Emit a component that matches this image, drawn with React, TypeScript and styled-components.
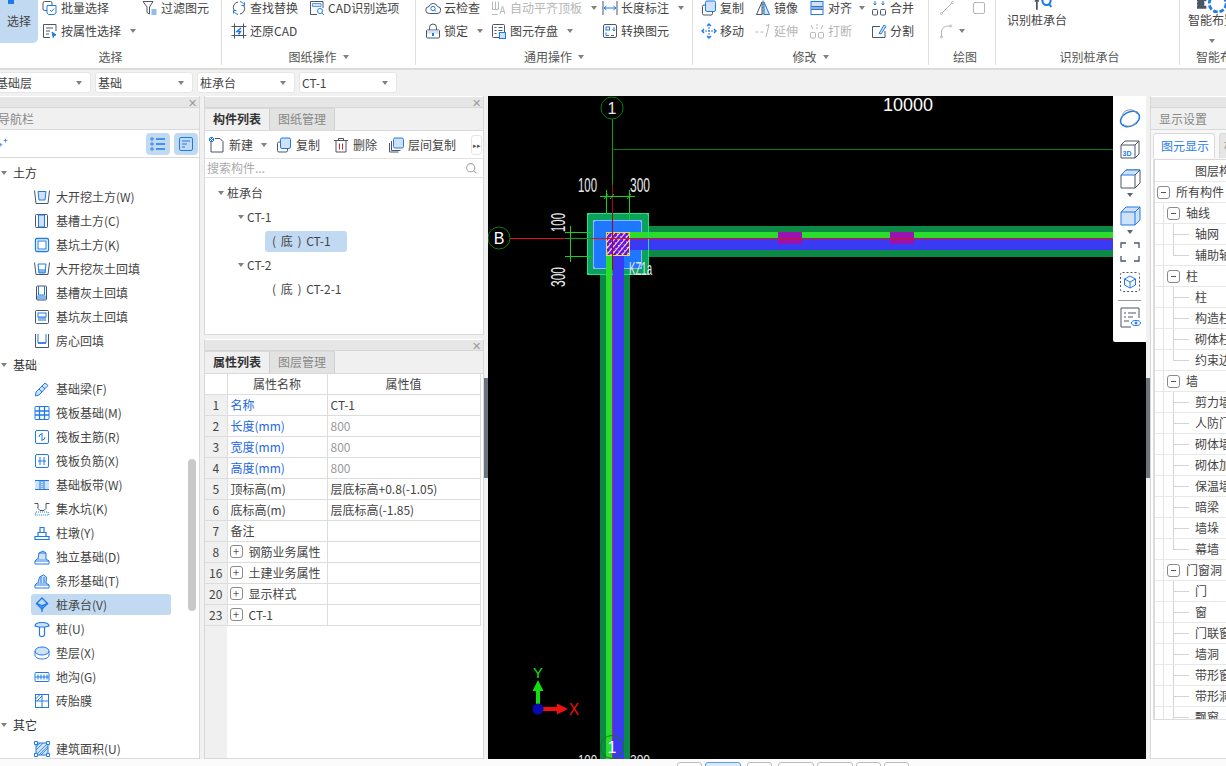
import React from "react";
import styled, { createGlobalStyle } from "styled-components";

const S = "#4a5568";
const B = "#1f7ae8";
const L = "#cfe2fa";
const G = "#b4b8bd";

const Global = createGlobalStyle`
  html, body { margin: 0; padding: 0; width: 1226px; height: 766px; overflow: hidden; background: #f1f1f1; }
  #root { width: 1226px; height: 766px; overflow: hidden; }
  * { box-sizing: border-box; }
  body { font-family: "Noto Sans CJK SC", "Liberation Sans", sans-serif; font-size: 12px; color: #333; line-height: 16px; }
`;

const Svg = styled.svg<{ $w?: number }>`
  width: ${(p) => p.$w ?? 16}px;
  height: ${(p) => p.$w ?? 16}px;
  flex: none;
  display: block;
`;

const icons: Record<string, React.ReactNode> = {
  batch: <><rect x="1" y="1.500" width="9" height="9" rx="1.500" /><path d="M5 5.500h9v7.500l-2 1.500H6.500L5 13z" stroke={B} fill="#fff" /><path d="M8 10l1.500 1.500L12 8.500" stroke={B} /></>,
  attr: <><path d="M14 8V1.500H1.500v13H8" /><path d="M4 5h7M4 8h4M4 11h3" /><path d="M10 9l4 3-2 .5-.8 2z" stroke={B} fill={B} /></>,
  filter: <><path d="M1 1.500h10L7.500 7v7L5 12.500V7z" /><path d="M9.500 10h5M9.500 12h5M9.500 14h5" stroke={B} /></>,
  replace: <><path d="M3 10a5.500 5.500 0 0 1 4-8M13 6a5.500 5.500 0 0 1-4 8" /><path d="M9 1.500a5.500 5.500 0 0 1 4 3M7 14.500a5.500 5.500 0 0 1-4-3" stroke={B} /><path d="M13.500 2.500v3h-3M2.500 13.500v-3h3" stroke={B} /></>,
  restore: <><path d="M0.500 3.500h15M0.500 12.500h15M3.500 .5v15M12.500 .5v15" /><path d="M10 5L6 8.500h3.500L7.500 11.500" stroke={B} strokeWidth="1.500" /></>,
  cad: <><path d="M14 8V1.500H1.500v13H8" /><path d="M3.500 3.500h8.500v3H3.500z" fill={L} stroke={B} strokeWidth=".7" /><circle cx="11" cy="11" r="2.500" stroke={B} /><path d="M13 13l2 2" stroke={B} /></>,
  cloud: <><path d="M4.500 13.500a3.500 3.500 0 0 1-.5-7 4.500 4.500 0 0 1 8.500 0 3.500 3.500 0 0 1-.5 7z" /><circle cx="8" cy="8.500" r="2.200" stroke={B} /><path d="M9.500 10l1.500 1.500" stroke={B} /></>,
  lock: <><path d="M4.500 7V4.500a3.500 3.500 0 0 1 7 0V7" /><rect x="1.500" y="7" width="13" height="8" rx="1" /><rect x="2" y="7.500" width="12" height="3" fill={L} stroke="none" /><path d="M8 10v3" stroke={B} strokeWidth="2" /></>,
  auto: <g stroke={G}><path d="M1.500 1.500v8M4.500 1.500v8M7.500 1.500v8M1.500 9.500h6M1 14.500h6" /><path d="M9 14l2.500-8L14 14M10 11.500h3" /></g>,
  store: <><rect x="1.500" y="1.500" width="12" height="13" rx="1" /><path d="M3.500 4.500h2M7.500 4.500h4M3.500 7.500h2M7.500 7.500h4M3.500 10.500h2" /><rect x="8.500" y="9.500" width="6" height="6" fill={L} stroke={B} /></>,
  dim: <><path d="M1 1v14M15 1v14" /><path d="M2 8h12M2 8l2.500-2M2 8l2.500 2M14 8l-2.500-2M14 8l-2.500 2" stroke={B} /></>,
  convert: <><rect x="1.500" y="1.500" width="13" height="13" rx="1.500" /><rect x="4" y="4" width="3.500" height="3" stroke={B} /><path d="M12 4v4l-1.500-1.500M12 8l1-1.500M4 9.500v3h3" stroke={B} /><path d="M9 12.500h3" /></>,
  copy: <><rect x="1.500" y="5" width="10" height="10" rx="1.500" /><rect x="4.500" y="1" width="10" height="10.500" rx="1.500" fill={L} stroke={B} /></>,
  mirror: <><path d="M7 2L1.500 14.500H7z" /><path d="M9 2l5.500 12.500H9z" fill={L} stroke={B} /><path d="M8 .5v15" strokeDasharray="2 1" /></>,
  align: <><rect x="2" y="1.500" width="12" height="5" fill={L} stroke={B} /><rect x="2" y="9.500" width="12" height="5" stroke={B} /><path d="M1 8h14" /></>,
  merge: <><rect x="1.500" y="9.500" width="5" height="5.500" rx="1" /><rect x="9.500" y="9.500" width="5" height="5.500" rx="1" /><path d="M4 1v4M2.500 3.500L4 5l1.500-1.500M12 1v4M10.500 3.500L12 5l1.500-1.500" stroke={B} /></>,
  move: <><path d="M8 1v14M1 8h14" stroke={B} strokeDasharray="2 1" /><path d="M6 3l2-2 2 2M6 13l2 2 2-2M3 6L1 8l2 2M13 6l2 2-2 2" stroke={B} strokeWidth="1.300" /></>,
  extend: <g stroke={G}><path d="M.5 9h3M5.500 9h3" /><path d="M11 3l3-1.500L11 14" /></g>,
  breakk: <g stroke={G}><path d="M8 1v6" strokeDasharray="2 1" /><rect x="1.500" y="9.500" width="5" height="5.500" rx="1" /><rect x="9.500" y="9.500" width="5" height="5.500" rx="1" /><path d="M2 2l2 4M14 2l-2 4" /></g>,
  split: <><path d="M14 8v6.500H1.500v-11H9" /><path d="M8 10.500L13 2l2 1.500L10 11z" stroke={B} fill={L} /></>,
  line: <g stroke={G}><path d="M3 13L13 3" /><circle cx="2.500" cy="13.500" r="1" /><circle cx="13.500" cy="2.500" r="1" /></g>,
  rect: <g stroke={G}><rect x="2.500" y="2.500" width="11" height="11" rx="1.500" /></g>,
  arc: <g stroke={G}><path d="M2.500 14V9a6 6 0 0 1 6-6h2" /><circle cx="2.500" cy="14" r="1" /><circle cx="11.500" cy="3" r="1" /></g>,
  n1: <><path d="M.5 1.500l1.500 13M15.500 1.500L14 14.500M2 14.500h12" /><path d="M4 2.500h8L11 11H5z" fill={L} stroke={B} /></>,
  n2: <><rect x="1.500" y="1.500" width="12" height="13" rx="1" /><rect x="4.500" y="2" width="6" height="12" fill={L} stroke={B} /></>,
  n3: <><rect x="1.500" y="1.500" width="13" height="13" rx="1.500" stroke={B} strokeWidth="1.300" /><rect x="4" y="4" width="8" height="8" stroke={B} /></>,
  n4: <><path d="M.5 1.500l1.500 12h12l1.500-12" /><path d="M4 3h8l-1 9H5z" stroke={B} /><path d="M4.500 8h7v4h-7z" fill={B} opacity=".55" stroke="none" /></>,
  n5: <><rect x="2.500" y="1" width="10" height="14" rx="1" stroke={S} /><path d="M4.500 1v9h6V1" stroke={B} /><rect x="3" y="10.500" width="9" height="4" fill={B} opacity=".55" stroke="none" /></>,
  n6: <><rect x="1.500" y="1.500" width="13" height="13" rx="1" /><rect x="4" y="4" width="8" height="4" stroke={B} /><rect x="4" y="8" width="8" height="4" fill={B} opacity=".55" stroke="none" /></>,
  n7: <><path d="M1.500 1v13.500h13V1" /><path d="M4 1v9h8V1" stroke={B} /><path d="M4 10h8" stroke={B} strokeWidth="1.500" /></>,
  n8: <><path d="M2 11L11 2l3 2.500L5 14l-3.500 1z" stroke={B} fill={L} /><path d="M5 8l3 3M8 5l3 3" stroke={B} /></>,
  n9: <g stroke={B}><rect x="1" y="1.500" width="14" height="13" rx="1" /><path d="M1 6h14M1 10h14M5.500 1.500v13M10.500 1.500v13" strokeWidth="1.300" /></g>,
  n10: <g stroke={B}><rect x="1.500" y="1.500" width="13" height="13" rx="1.500" /><path d="M8 4v8M5 8a3 3 0 0 1 3-3M11 8a3 3 0 0 1-3 3" /></g>,
  n11: <g stroke={B}><rect x="1.500" y="1.500" width="13" height="13" rx="1.500" /><path d="M6 4v8M10 4v8M4 8h8" /></g>,
  n12: <g stroke={B}><rect x="1" y="3" width="14" height="10" fill={L} stroke="none" /><path d="M1 3.500h14M1 12.500h14M6 3.500v9M10 3.500v9" /><path d="M8 4v8" strokeDasharray="1 1" /></g>,
  n13: <><path d="M.5 2.500h3.500v5l2 2h4l2-2v-5h3.500" /><path d="M2 11h12l1 3H1z" stroke={B} strokeDasharray="1 1" /></>,
  n14: <g stroke={B}><path d="M1 14.500h14v-3H1zM4 11.500V7.500h8v4M6 7.500v-5h4v5" strokeWidth="1.200" /></g>,
  n15: <g stroke={B}><path d="M1 15h14v-3L12 10H3L1 12zM1 12h14" /><path d="M4 10l1-6 4-2 3 2v6" fill={L} /><path d="M5 4h7" /></g>,
  n16: <g stroke={B}><path d="M1 15h14v-3L12 10H3L1 12zM1 12h14" /><path d="M4 10l1.500-6 4-2 3 2-.5 6" fill={L} /><path d="M7 4v6M10 4v6" /></g>,
  n17: <g stroke={B}><path d="M8 1l5.500 5.500L8 12 2.500 6.500z" strokeWidth="1.400" /><path d="M2.500 6.500L8 9l5.500-2.500M8 9v6" strokeWidth="1.400" /></g>,
  n18: <g stroke={B}><path d="M1 5c0-2.500 3-3.500 7-3.500s7 1 7 3.500l-4 1H5z" fill={L} strokeWidth="1.200" /><path d="M5.500 6v8a2.500 1.500 0 0 0 5 0V6" strokeWidth="1.200" /></g>,
  n19: <g stroke={B}><ellipse cx="8" cy="6" rx="7" ry="4" fill={L} /><path d="M1 6v4c0 2.500 3 4 7 4s7-1.500 7-4V6" /></g>,
  n20: <g stroke={B}><rect x="1" y="3.500" width="14" height="9" rx="1" /><path d="M1 8h14M4 5.500v5M7 5.500v5M10 5.500v5M13 5.500v5" /></g>,
  n21: <g stroke={B}><rect x="1.500" y="1.500" width="13" height="13" /><path d="M8 1.500v13M1.500 8h13M1.500 6l4.500-4.500M3 8l5-5" /></g>,
  n22: <g stroke={B}><rect x="2" y="2" width="12" height="12" fill={L} /><path d="M2 9l7-7M2 14L14 2M7 14l7-7M5 14l9-9M2 6l4-4" strokeWidth=".8" /><path d="M.5 .5h3v3h-3zM12.500 .5h3v3h-3zM.5 12.500h3v3h-3zM12.500 12.500h3v3h-3z" fill="#fff" strokeWidth="1" /></g>,
  listA: <g stroke={B}><circle cx="2" cy="3" r="1.200" /><circle cx="2" cy="8" r="1.200" /><circle cx="2" cy="13" r="1.200" /><path d="M6 3h9M6 8h9M6 13h9" strokeWidth="1.300" /></g>,
  listB: <g stroke={B}><rect x="1.500" y="1.500" width="13" height="13" rx="1.500" /><path d="M4 5h8M4 8h5M4 11h3" /></g>,
  newI: <><path d="M2 3h3M2 3v12h12V4.500L11 1.500H6" /><rect x="0" y="0" width="5" height="5" fill={B} stroke="none" /><path d="M0 0l5 5M5 0L0 5" stroke="#fff" /></>,
  del: <><path d="M1 3.500h14M5.500 3.500V1.500h5v2M3 3.500v11.500h10V3.500" /><path d="M6.500 6.500v6M9.500 6.500v6" stroke="#e02020" /></>,
  layer: <><path d="M1.500 6v9h9" /><path d="M3.500 4v9.500h9" /><rect x="5.500" y="1" width="10" height="10" rx="1.500" fill={L} stroke={B} /></>,
  search: <g stroke="#aaa" strokeWidth="1.300"><circle cx="7" cy="7" r="5" /><path d="M10.500 10.500l3.500 3.500" /></g>,
  plus2: <g stroke={B}><path d="M0 12h6M3 9v6M8 4.500h7M11.500 1v7" strokeWidth="1.300" /></g>,
  pile: <><path d="M.5 1h9M5 1v9" stroke={S} strokeWidth="1.300" /><path d="M3.500 4L5 2.500 6.500 4" stroke={S} /><circle cx="12" cy="3.500" r="3" stroke={B} strokeWidth="1.500" /><path d="M14 6l1.500 2" stroke={B} strokeWidth="1.500" /></>,
  smart: <><path d="M0 2h5M0 6h5" strokeWidth="1.600" /><circle cx="2" cy="4" r="1.500" fill={S} /><circle cx="11" cy="4" r="4.500" stroke={B} strokeWidth="1.500" strokeDasharray="2.500 1" /></>,
};

const Icon = ({ name, size = 16 }: { name: string; size?: number }) => (
  <Svg $w={size} viewBox="0 0 16 16" fill="none" stroke={S} strokeWidth="1">{icons[name]}</Svg>
);

const Caret = styled.i<{ $ml?: number }>`
  display: inline-block;
  flex: none;
  width: 0;
  height: 0;
  margin-left: ${(p) => p.$ml ?? 6}px;
  border-left: 3.5px solid transparent;
  border-right: 3.5px solid transparent;
  border-top: 4px solid #808080;
`;

/* ---------- ribbon ---------- */
const Ribbon = styled.header`
  display: flex;
  height: 70px;
  background: #fff;
  border-bottom: 2px solid #dcdcdc;
  overflow: hidden;
`;
const Group = styled.section<{ $w?: number; $pad?: number; $end?: boolean }>`
  width: ${(p) => (p.$w ? `${p.$w}px` : "auto")};
  flex: ${(p) => (p.$w ? "none" : "1")};
  min-width: 0;
  height: 65px;
  padding-left: ${(p) => p.$pad ?? 0}px;
  display: flex;
  flex-direction: column;
  justify-content: flex-end;
  border-right: ${(p) => (p.$end ? "none" : "1px solid #dedede")};
`;
const GroupBody = styled.div<{ $cols: string }>`
  flex: none;
  height: 46px;
  display: grid;
  grid-template-columns: ${(p) => p.$cols};
  grid-template-rows: 23px 23px;
`;
const GroupLabel = styled.div<{ $left?: number; $start?: boolean }>`
  flex: none;
  height: 23px;
  padding-top: 7px;
  margin-left: ${(p) => p.$left ?? 0}px;
  text-align: center;
  color: #555;
  display: flex;
  white-space: nowrap;
  justify-content: ${(p) => (p.$start ? "flex-start" : "center")};
  align-items: center;
`;
const RibbonItem = styled.div<{ $off?: boolean }>`
  display: flex;
  align-items: center;
  gap: 3px;
  white-space: nowrap;
  color: ${(p) => (p.$off ? "#b5b5b5" : "#444")};
`;
const SelectBig = styled.div`
  position: relative;
  grid-row: 1 / 3;
  width: 38px;
  height: 47px;
  background: #c2d9f2;
  border-radius: 0 0 5px 0;
  display: flex;
  flex-direction: column;
  align-items: center;
  color: #444;
  padding-top: 17px;
`;
const ArrowTip = styled.span`
  position: absolute;
  top: 0;
  left: 8px;
  width: 6px;
  height: 8px;
  background: ${B};
`;
const BigTool = styled.div`
  grid-row: 1 / 3;
  display: flex;
  flex-direction: column;
  align-items: flex-start;
  color: #444;
  white-space: nowrap;
`;
const BigIcon = styled.div<{ $ml: number }>`
  height: 13px;
  margin-left: ${(p) => p.$ml}px;
`;
const BigText = styled.div`
  margin-top: 3px;
  height: 16px;
  margin-bottom: 11px;
`;

/* ---------- selector bar ---------- */
const SelectorBar = styled.div`
  height: 26px;
  display: flex;
  gap: 4px;
  padding-top: 2px;
  margin-left: -7px;
`;
const Select = styled.div`
  width: 98px;
  height: 21px;
  background: #fff;
  border-radius: 3px;
  border: 1px solid #e6e6e6;
  padding: 0 8px 0 2px;
  display: flex;
  align-items: center;
  justify-content: space-between;
  color: #444;
`;

/* ---------- main ---------- */
const Main = styled.main`
  display: flex;
  height: 663px;
`;
const Panel = styled.div`
  position: relative;
  display: flex;
  flex-direction: column;
  background: #fff;
  border: 1px solid #d9d9d9;
  border-top: none;
  overflow: hidden;
`;
const NavPanel = styled(Panel)`
  width: 200px;
  flex: none;
  border-left: none;
`;
const TitleBar = styled.div`
  flex: none;
  height: 11px;
  margin-top: 1px;
  background: #e6e6e6;
  display: flex;
  justify-content: flex-end;
  align-items: center;
  padding-right: 2px;
  color: #9a9a9a;
  font-size: 11px;
  line-height: 11px;
  border-bottom: 1px solid #d6d6d6;
`;
const Heading = styled.div<{ $pad?: number }>`
  flex: none;
  height: 22px;
  background: #f0f0f0;
  padding-left: ${(p) => p.$pad ?? 0}px;
  color: #888;
  display: flex;
  align-items: center;
  border-bottom: 1px solid #d9d9d9;
`;
const NavTitle = styled.span`
  margin-left: -2px;
`;
const NavTools = styled.div`
  flex: none;
  height: 28px;
  border-bottom: 1px solid #d9d9d9;
  display: flex;
  align-items: center;
  justify-content: space-between;
  padding-right: 1px;
`;
const PlusMark = styled.span`
  margin-left: -1px;
  margin-top: -2px;
`;
const ToggleSet = styled.div`
  display: flex;
  gap: 4px;
`;
const Toggle = styled.div`
  width: 24px;
  height: 22px;
  border-radius: 4px;
  background: #c2d9f2;
  display: flex;
  align-items: center;
  justify-content: center;
`;
const NavList = styled.div`
  flex: 1;
  padding-top: 2.500px;
  overflow: hidden;
  display: flex;
  flex-direction: column;
`;
const NavGroup = styled.div`
  flex: none;
  height: 24px;
  display: flex;
  align-items: center;
  padding-left: 1px;
  color: #333;
  gap: 6px;
`;
const NavItem = styled.div<{ $on?: boolean }>`
  flex: none;
  height: 21px;
  margin: 1.500px 0 1.500px 31px;
  width: 140px;
  padding-left: 3px;
  display: flex;
  align-items: center;
  gap: 6px;
  border-radius: 3px;
  background: ${(p) => (p.$on ? "#c2d9f2" : "transparent")};
  color: #444;
  white-space: nowrap;
`;
const Scroll = styled.div`
  position: absolute;
  left: 188px;
  top: 363px;
  width: 8px;
  height: 152px;
  border-radius: 4px;
  background: #c9c9c9;
`;

const Middle = styled.div`
  width: 280px;
  flex: none;
  margin-left: 4px;
  display: flex;
  flex-direction: column;
  gap: 4px;
`;
const ListPanel = styled(Panel)`
  height: 239px;
  flex: none;
`;
const PropPanel = styled(Panel)`
  flex: 1;
`;
const Tabs = styled.div`
  flex: none;
  height: 23px;
  background: #f0f0f0;
  display: flex;
  border-bottom: 1px solid #d9d9d9;
`;
const Tab = styled.div<{ $on?: boolean }>`
  width: 65px;
  padding-bottom: 1px;
  display: flex;
  align-items: center;
  justify-content: center;
  font-weight: ${(p) => (p.$on ? 700 : 400)};
  color: ${(p) => (p.$on ? "#333" : "#888")};
  background: ${(p) => (p.$on ? "#f0f0f0" : "#e2e2e2")};
  border-right: 1px solid #d0d0d0;
  border-top: 1px solid #d9d9d9;
`;
const ListTools = styled.div`
  flex: none;
  height: 28px;
  display: flex;
  align-items: center;
  padding-left: 4px;
  border-bottom: 1px solid #e2e2e2;
  position: relative;
`;
const ToolBtn = styled.div<{ $w: number }>`
  width: ${(p) => p.$w}px;
  display: flex;
  align-items: center;
  gap: 4px;
  color: #444;
  white-space: nowrap;
`;
const MoreBtn = styled.div`
  margin-left: auto;
  margin-right: 1px;
  width: 11px;
  height: 20px;
  border: 1px solid #e6e6e6;
  border-radius: 3px;
  color: #555;
  font-size: 7px;
  line-height: 18px;
  text-align: center;
`;
const SearchRow = styled.div`
  flex: none;
  height: 19px;
  padding: 0 5px 0 2px;
  display: flex;
  align-items: center;
  justify-content: space-between;
  color: #aaa;
  border-bottom: 1px solid #e2e2e2;
`;
const TreeBody = styled.div`
  flex: 1;
  padding-top: 3px;
`;
const TreeRow = styled.div<{ $indent: number }>`
  height: 24px;
  padding-left: ${(p) => p.$indent}px;
  display: flex;
  align-items: center;
  gap: 3px;
  color: #444;
`;
const Pill = styled.span<{ $on?: boolean }>`
  width: 82px;
  height: 21px;
  padding-left: 7px;
  display: flex;
  align-items: center;
  border-radius: 3px;
  white-space: pre;
  word-spacing: 2px;
  background: ${(p) => (p.$on ? "#c2d9f2" : "transparent")};
`;

const TableWrap = styled.div`
  flex: 1;
  background: linear-gradient(to right, #f0f0f0 22px, #fff 22px);
`;
const PropTable = styled.table`
  border-collapse: collapse;
  table-layout: fixed;
  width: 275px;
`;
const Th = styled.th`
  height: 20px;
  padding: 0;
  font-weight: 400;
  color: #444;
  background: #fff;
  border-right: 1px solid #ddd;
  border-bottom: 1px solid #ddd;
  text-align: center;
`;
const NumCell = styled.td`
  height: 21px;
  padding: 0;
  background: #f0f0f0;
  text-align: center;
  color: #444;
  border-right: 1px solid #ddd;
  border-bottom: 1px solid #ddd;
`;
const Td = styled.td<{ $c?: string }>`
  height: 21px;
  padding: 0 0 0 3px;
  background: #fff;
  color: ${(p) => p.$c ?? "#444"};
  border-right: 1px solid #ddd;
  border-bottom: 1px solid #ddd;
  white-space: nowrap;
  overflow: hidden;
`;
const Expand = styled.div`
  display: flex;
  align-items: center;
  gap: 6px;
  margin-left: -1px;
`;
const PlusBox = styled.span`
  width: 13px;
  height: 13px;
  border: 1px solid #8a8a8a;
  border-radius: 3px;
  font-size: 11px;
  line-height: 10px;
  text-align: center;
  color: #555;
  flex: none;
`;

const Splitter = styled.div`
  width: 4px;
  flex: none;
  display: flex;
  align-items: center;
`;
const Grip = styled.div`
  width: 4px;
  height: 100px;
  background: #6c757f;
`;

const Canvas = styled.div`
  position: relative;
  width: 658px;
  flex: none;
  background: #000;
  overflow: hidden;
`;
const Drawing = styled.svg`
  display: block;
  width: 658px;
  height: 663px;
`;
const FloatBar = styled.div`
  position: absolute;
  top: 0;
  right: 0;
  width: 33px;
  height: 246px;
  background: #fff;
  border-radius: 0 0 0 2px;
  display: flex;
  flex-direction: column;
  align-items: center;
  padding-top: 12px;
`;
const FloatBtn = styled.div<{ $mb: number }>`
  margin-bottom: ${(p) => p.$mb}px;
  height: 22px;
`;
const FloatCaret = styled(Caret)`
  margin-left: 0;
  margin-top: 1px;
  margin-bottom: 7px;
  border-top-color: #5a6472;
`;
const FloatRule = styled.div`
  width: 23px;
  height: 1px;
  background: #9a9a9a;
  margin-bottom: 5px;
`;

const RightPanel = styled(Panel)`
  flex: 1;
  border-right: none;
`;
const RightTabs = styled.div`
  flex: none;
  height: 29px;
  display: flex;
  gap: 4px;
  padding: 3px 0 0 2px;
  background: #f7f7f7;
  overflow: hidden;
`;
const RightTab = styled.div<{ $on?: boolean }>`
  flex: none;
  width: ${(p) => (p.$on ? "62px" : "40px")};
  height: 25px;
  padding-left: ${(p) => (p.$on ? "7px" : "4px")};
  display: flex;
  align-items: center;
  white-space: nowrap;
  color: ${(p) => (p.$on ? "#2b7de9" : "#888")};
  background: ${(p) => (p.$on ? "#fff" : "#e6e6e6")};
  border: 1px solid #d9d9d9;
  border-bottom: none;
  border-radius: 3px 3px 0 0;
`;
const LayerTree = styled.div`
  height: 561px;
  margin-left: 2px;
  width: 120px;
  overflow: hidden;
  border-left: 2px solid #dcdcdc;
  border-top: 1px solid #dcdcdc;
  border-bottom: 1px solid #dcdcdc;
`;
const LayerHead = styled.div`
  height: 22px;
  padding-left: 40px;
  display: flex;
  align-items: center;
  color: #444;
  border-bottom: 1px solid #e8e8e8;
`;
const LayerRow = styled.div<{ $lv: number; $last?: boolean }>`
  position: relative;
  height: 21px;
  display: flex;
  align-items: center;
  gap: 6px;
  white-space: nowrap;
  color: #444;
  padding-left: ${(p) => [2, 12, 40][p.$lv]}px;
  border-bottom: 1px solid #e8e8e8;
  background: ${(p) => (p.$lv > 0 ? "linear-gradient(#e4e4e4,#e4e4e4) 8px 0/1px 100% no-repeat" : "none")};
  &::before {
    content: "";
    display: ${(p) => (p.$lv === 2 ? "block" : "none")};
    position: absolute;
    left: 18px;
    top: 0;
    width: 16px;
    height: ${(p) => (p.$last ? "10px" : "20px")};
    border-left: 1px solid #d4d4d4;
  }
  &::after {
    content: "";
    display: ${(p) => (p.$lv === 2 ? "block" : "none")};
    position: absolute;
    left: 18px;
    top: 10px;
    width: 16px;
    border-top: 1px solid #d4d4d4;
  }
`;
const MinusBox = styled.span`
  flex: none;
  width: 13px;
  height: 13px;
  border: 1px solid #8a8a8a;
  border-radius: 3px;
  background: #fff;
  position: relative;
  &::after {
    content: "";
    position: absolute;
    left: 3px;
    top: 5px;
    width: 5px;
    height: 1px;
    background: #555;
  }
`;

const BottomBar = styled.footer`
  height: 7px;
  background: #fbfbfb;
  display: flex;
  gap: 3px;
  padding: 3px 0 0 677px;
  overflow: hidden;
`;
const PageBtn = styled.div<{ $w: number; $on?: boolean; $gap?: number }>`
  flex: none;
  width: ${(p) => p.$w}px;
  height: 14px;
  margin-right: ${(p) => p.$gap ?? 0}px;
  border: 1px solid ${(p) => (p.$on ? "#5a9cf0" : "#bdbdbd")};
  border-radius: 3px;
  background: ${(p) => (p.$on ? "#dbe9fa" : "#fff")};
`;

const navData: (string | [string, string])[] = [
  "土方",
  ["n1", "大开挖土方(W)"], ["n2", "基槽土方(C)"], ["n3", "基坑土方(K)"], ["n4", "大开挖灰土回填"], ["n5", "基槽灰土回填"], ["n6", "基坑灰土回填"], ["n7", "房心回填"],
  "基础",
  ["n8", "基础梁(F)"], ["n9", "筏板基础(M)"], ["n10", "筏板主筋(R)"], ["n11", "筏板负筋(X)"], ["n12", "基础板带(W)"], ["n13", "集水坑(K)"], ["n14", "柱墩(Y)"], ["n15", "独立基础(D)"], ["n16", "条形基础(T)"], ["n17", "桩承台(V)"], ["n18", "桩(U)"], ["n19", "垫层(X)"], ["n20", "地沟(G)"], ["n21", "砖胎膜"],
  "其它",
  ["n22", "建筑面积(U)"],
];

const blue = "#2468e0";
const gray = "#999";
const props: { n: number; a: string; b?: string; ac?: string; bc?: string; plus?: boolean }[] = [
  { n: 1, a: "名称", b: "CT-1", ac: blue },
  { n: 2, a: "长度(mm)", b: "800", ac: blue, bc: gray },
  { n: 3, a: "宽度(mm)", b: "800", ac: blue, bc: gray },
  { n: 4, a: "高度(mm)", b: "800", ac: blue, bc: gray },
  { n: 5, a: "顶标高(m)", b: "层底标高+0.8(-1.05)" },
  { n: 6, a: "底标高(m)", b: "层底标高(-1.85)" },
  { n: 7, a: "备注" },
  { n: 8, a: "钢筋业务属性", plus: true },
  { n: 16, a: "土建业务属性", plus: true },
  { n: 20, a: "显示样式", plus: true },
  { n: 23, a: "CT-1", plus: true },
];

const layers: [number, string, boolean?][] = [
  [0, "所有构件"], [1, "轴线"], [2, "轴网"], [2, "辅助轴线", true], [1, "柱"], [2, "柱"], [2, "构造柱"], [2, "砌体柱"], [2, "约束边缘", true],
  [1, "墙"], [2, "剪力墙"], [2, "人防门框"], [2, "砌体墙"], [2, "砌体加筋"], [2, "保温墙"], [2, "暗梁"], [2, "墙垛"], [2, "幕墙", true],
  [1, "门窗洞"], [2, "门"], [2, "窗"], [2, "门联窗"], [2, "墙洞"], [2, "带形窗"], [2, "带形洞"], [2, "飘窗"],
];

const Item = ({ icon, text, off, caret, ml }: { icon: string; text: string; off?: boolean; caret?: boolean; ml?: number }) => (
  <RibbonItem $off={off}>
    <Icon name={icon} />
    <span>{text}</span>
    {caret && <Caret $ml={ml} />}
  </RibbonItem>
);

const CAD = () => (
  <Drawing viewBox="488 96 658 663" shapeRendering="crispEdges">
    <defs>
      <pattern id="h" width="4" height="4" patternUnits="userSpaceOnUse" patternTransform="rotate(-50)">
        <rect width="4" height="4" fill="#6a12d8" />
        <rect width="4" height="1.400" fill="#f4e6ff" />
        <rect x="1" y="2.500" width="1" height="1" fill="#d9b8ff" />
      </pattern>
    </defs>
    <rect x="630" y="226" width="483" height="31" fill="#0b8a45" />
    <rect x="630" y="232" width="483" height="6" fill="#2bdc2b" />
    <rect x="630" y="239" width="483" height="11" fill="#3a3af5" />
    <rect x="778" y="232" width="24" height="12" fill="#9a12b0" />
    <rect x="890" y="232" width="24" height="12" fill="#9a12b0" />
    <rect x="600" y="270" width="30" height="489" fill="#0b8a45" />
    <rect x="606" y="270" width="6" height="489" fill="#2bdc2b" />
    <rect x="613" y="270" width="11" height="489" fill="#3a3af5" />
    <rect x="612" y="270" width="1" height="489" fill="#b0209a" />
    <rect x="587.500" y="213.500" width="61" height="61" rx="2" fill="#0aa35c" stroke="#20e08a" strokeWidth="1.500" />
    <rect x="593.500" y="220.500" width="48" height="48" rx="2" fill="#1e78ff" stroke="#8db4ff" strokeWidth="1.500" />
    <rect x="630" y="232" width="18" height="6" fill="#2bdc2b" />
    <rect x="630" y="239" width="18" height="11" fill="#3a3af5" />
    <rect x="606" y="256" width="6" height="19" fill="#2bdc2b" />
    <rect x="613" y="256" width="11" height="19" fill="#3a3af5" />
    <rect x="606.500" y="232.500" width="23" height="23" fill="url(#h)" stroke="#f2e020" />
    <path d="M510 238.500H1113" stroke="#e01010" />
    <path d="M612.500 119V185" stroke="#0aa00a" />
    <path d="M612.500 185V270" stroke="#a00c0c" />
    <path d="M612 149.500H1113" stroke="#0a7a0a" />
    <circle cx="612" cy="108" r="11" fill="none" stroke="#0a800a" shapeRendering="auto" />
    <circle cx="499" cy="238" r="11" fill="none" stroke="#0a800a" shapeRendering="auto" />
    <circle cx="612" cy="747" r="11.500" fill="none" stroke="#0a800a" shapeRendering="auto" />
    <g stroke="#18d018">
      <path d="M600 196.500H635M606.500 190V214M629.500 190V220" />
      <path d="M565 232.500H591M570.500 226V262M565 256.500H591" />
      <path d="M565 238.500H591" stroke="#0f9f0f" />
      <path d="M604 199l4-5M610 199l4-5M627 199l4-5" shapeRendering="auto" />
    </g>
    <g fontFamily="'Liberation Sans', sans-serif" fill="#e8e8e8" shapeRendering="auto">
      <text x="883" y="111" fontSize="18" fill="#fff" textLength="50" lengthAdjust="spacingAndGlyphs">10000</text>
      <text x="578" y="192" fontSize="21" textLength="19" lengthAdjust="spacingAndGlyphs">100</text>
      <text x="630" y="192" fontSize="21" textLength="20" lengthAdjust="spacingAndGlyphs">300</text>
      <text transform="translate(565,232) rotate(-90)" fontSize="21" textLength="19" lengthAdjust="spacingAndGlyphs">100</text>
      <text transform="translate(565,287) rotate(-90)" fontSize="21" textLength="20" lengthAdjust="spacingAndGlyphs">300</text>
      <text x="629" y="275" fontSize="18" textLength="23" lengthAdjust="spacingAndGlyphs">KZ1a</text>
      <text x="612" y="114" fontSize="16" textAnchor="middle">1</text>
      <text x="499" y="244" fontSize="16" textAnchor="middle" fill="#fff">B</text>
      <text x="612" y="753" fontSize="16" textAnchor="middle" fill="#fff">1</text>
      <text x="578" y="765" fontSize="14" textLength="19" lengthAdjust="spacingAndGlyphs">100</text>
      <text x="630" y="765" fontSize="14" textLength="20" lengthAdjust="spacingAndGlyphs">300</text>
    </g>
    <g shapeRendering="auto">
      <rect x="536" y="690" width="4" height="19" fill="#10e010" />
      <path d="M538 680l5.500 11h-11z" fill="#10e010" />
      <rect x="538" y="707" width="21" height="4" fill="#f01010" />
      <path d="M568 709l-11 5.500v-11z" fill="#f01010" />
      <circle cx="538" cy="709" r="5.500" fill="#0808b0" />
      <text x="533" y="678" fontFamily="'Liberation Sans', sans-serif" fontSize="14" fill="#10e010" textLength="10" lengthAdjust="spacingAndGlyphs">Y</text>
      <text x="569" y="715" fontFamily="'Liberation Sans', sans-serif" fontSize="16" fill="#f01010" textLength="10" lengthAdjust="spacingAndGlyphs">X</text>
    </g>
  </Drawing>
);

const FloatIcons: Record<string, React.ReactNode> = {
  orbit: <><ellipse cx="11" cy="11" rx="10" ry="7" transform="rotate(-28 11 11)" stroke={B} strokeWidth="1.500" /><path d="M3 9a8 8 0 0 1 15-3M4 16c3 3 9 3 13-1" stroke="#8a94a3" /></>,
  d3: <><path d="M2 7l4-4h14v13l-4 4H2zM2 7h14v13M16 7l4-4" /><text x="3.500" y="18" fontSize="7" fontWeight="700" fill={B} stroke="none" fontFamily="'Liberation Sans',sans-serif">3D</text></>,
  cubeTop: <><path d="M2 8l5-5h14v13l-5 5H2z" /><path d="M2 8l5-5h14l-5 5z" fill={L} stroke={B} /><path d="M16 8v13M16 8l5-5" /></>,
  cube: <><path d="M2 8l5-5h14v13l-5 5H2z" fill={L} stroke={B} /><path d="M2 8h14v13M16 8l5-5" stroke={B} /></>,
  frame: <path d="M2 7V2h5M15 2h5v5M20 15v5h-5M7 20H2v-5" strokeWidth="1.300" />,
  dash: <><rect x="1.500" y="1.500" width="19" height="19" rx="2" strokeDasharray="2 2" /><path d="M11 5l5.500 3v6L11 17l-5.500-3V8zM5.500 8l5.500 3 5.500-3M11 11v6" stroke={B} /></>,
  note: <><path d="M20 12V2H2v19h10" /><path d="M5 7h2M9 7h8M5 11h2M9 11h5M5 15h5" /><ellipse cx="17" cy="17" rx="4.500" ry="2.500" stroke={B} /><circle cx="17" cy="17" r="1" fill={B} stroke={B} /></>,
};
const FIcon = ({ name }: { name: string }) => (
  <Svg $w={22} viewBox="0 0 22 22" fill="none" stroke={S} strokeWidth="1">{FloatIcons[name]}</Svg>
);

export default function App() {
  return (
    <>
      <Global />
      <Ribbon>
        <Group $w={222}>
          <GroupBody $cols="42px 100px 1fr">
            <SelectBig><ArrowTip />选择</SelectBig>
            <Item icon="batch" text="批量选择" />
            <Item icon="filter" text="过滤图元" />
            <Item icon="attr" text="按属性选择" caret />
          </GroupBody>
          <GroupLabel>选择</GroupLabel>
        </Group>
        <Group $w={194} $pad={9}>
          <GroupBody $cols="78px 1fr">
            <Item icon="replace" text="查找替换" />
            <Item icon="cad" text="CAD识别选项" />
            <Item icon="restore" text="还原CAD" />
          </GroupBody>
          <GroupLabel $left={-9}>图纸操作<Caret /></GroupLabel>
        </Group>
        <Group $w={277} $pad={9}>
          <GroupBody $cols="66px 111px 1fr">
            <Item icon="cloud" text="云检查" />
            <Item icon="auto" text="自动平齐顶板" off caret />
            <Item icon="dim" text="长度标注" caret />
            <Item icon="lock" text="锁定" caret />
            <Item icon="store" text="图元存盘" caret />
            <Item icon="convert" text="转换图元" />
          </GroupBody>
          <GroupLabel $left={-9}>通用操作<Caret /></GroupLabel>
        </Group>
        <Group $w={236} $pad={8}>
          <GroupBody $cols="54px 54px 62px 1fr">
            <Item icon="copy" text="复制" />
            <Item icon="mirror" text="镜像" />
            <Item icon="align" text="对齐" caret ml={4} />
            <Item icon="merge" text="合并" />
            <Item icon="move" text="移动" />
            <Item icon="extend" text="延伸" off />
            <Item icon="breakk" text="打断" off />
            <Item icon="split" text="分割" />
          </GroupBody>
          <GroupLabel $left={-8}>修改<Caret /></GroupLabel>
        </Group>
        <Group $w={67} $pad={10}>
          <GroupBody $cols="32px 1fr">
            <RibbonItem><Icon name="line" /></RibbonItem>
            <RibbonItem><Icon name="rect" /></RibbonItem>
            <RibbonItem><Icon name="arc" /><Caret $ml={1} /></RibbonItem>
          </GroupBody>
          <GroupLabel $left={-4}>绘图</GroupLabel>
        </Group>
        <Group $w={184} $pad={11}>
          <GroupBody $cols="1fr">
            <BigTool>
              <BigIcon $ml={23}><Icon name="pile" size={22} /></BigIcon>
              <BigText>识别桩承台</BigText>
            </BigTool>
          </GroupBody>
          <GroupLabel $left={-7}>识别桩承台</GroupLabel>
        </Group>
        <Group $pad={8} $end>
          <GroupBody $cols="1fr">
            <BigTool>
              <BigIcon $ml={9}><Icon name="smart" size={30} /></BigIcon>
              <BigText>智能布置</BigText>
              <Caret $ml={21} />
            </BigTool>
          </GroupBody>
          <GroupLabel $left={8} $start>智能布置</GroupLabel>
        </Group>
      </Ribbon>

      <SelectorBar>
        {["基础层", "基础", "桩承台", "CT-1"].map((t) => (
          <Select key={t}>{t}<Caret $ml={0} /></Select>
        ))}
      </SelectorBar>

      <Main>
        <NavPanel>
          <TitleBar>✕</TitleBar>
          <Heading><NavTitle>导航栏</NavTitle></Heading>
          <NavTools>
            <PlusMark><Icon name="plus2" size={9} /></PlusMark>
            <ToggleSet>
              <Toggle><Icon name="listA" /></Toggle>
              <Toggle><Icon name="listB" /></Toggle>
            </ToggleSet>
          </NavTools>
          <NavList>
            {navData.map((d) =>
              typeof d === "string" ? (
                <NavGroup key={d}><Caret $ml={0} />{d}</NavGroup>
              ) : (
                <NavItem key={d[1]} $on={d[1] === "桩承台(V)"}><Icon name={d[0]} />{d[1]}</NavItem>
              )
            )}
          </NavList>
          <Scroll />
        </NavPanel>

        <Middle>
          <ListPanel>
            <TitleBar>✕</TitleBar>
            <Tabs><Tab $on>构件列表</Tab><Tab>图纸管理</Tab></Tabs>
            <ListTools>
              <ToolBtn $w={67}><Icon name="newI" />新建<Caret $ml={4} /></ToolBtn>
              <ToolBtn $w={57}><Icon name="copy" />复制</ToolBtn>
              <ToolBtn $w={55}><Icon name="del" />删除</ToolBtn>
              <ToolBtn $w={70}><Icon name="layer" />层间复制</ToolBtn>
              <MoreBtn>▸▸</MoreBtn>
            </ListTools>
            <SearchRow>搜索构件...<Icon name="search" size={13} /></SearchRow>
            <TreeBody>
              <TreeRow $indent={13}><Caret $ml={0} />桩承台</TreeRow>
              <TreeRow $indent={33}><Caret $ml={0} />CT-1</TreeRow>
              <TreeRow $indent={60}><Pill $on>( 底 ) CT-1</Pill></TreeRow>
              <TreeRow $indent={33}><Caret $ml={0} />CT-2</TreeRow>
              <TreeRow $indent={60}><Pill>( 底 ) CT-2-1</Pill></TreeRow>
            </TreeBody>
          </ListPanel>
          <PropPanel>
            <TitleBar>✕</TitleBar>
            <Tabs><Tab $on>属性列表</Tab><Tab>图层管理</Tab></Tabs>
            <TableWrap>
              <PropTable>
                <colgroup><col width="22" /><col width="100" /><col width="153" /></colgroup>
                <thead>
                  <tr><Th /><Th>属性名称</Th><Th>属性值</Th></tr>
                </thead>
                <tbody>
                  {props.map((r) => (
                    <tr key={r.n}>
                      <NumCell>{r.n}</NumCell>
                      <Td $c={r.ac}>
                        {r.plus ? <Expand><PlusBox>+</PlusBox>{r.a}</Expand> : r.a}
                      </Td>
                      <Td $c={r.bc}>{r.b}</Td>
                    </tr>
                  ))}
                </tbody>
              </PropTable>
            </TableWrap>
          </PropPanel>
        </Middle>

        <Splitter><Grip /></Splitter>

        <Canvas>
          <CAD />
          <FloatBar>
            <FloatBtn $mb={8}><FIcon name="orbit" /></FloatBtn>
            <FloatBtn $mb={7}><FIcon name="d3" /></FloatBtn>
            <FloatBtn $mb={3}><FIcon name="cubeTop" /></FloatBtn>
            <FloatCaret />
            <FloatBtn $mb={3}><FIcon name="cube" /></FloatBtn>
            <FloatCaret />
            <FloatBtn $mb={8}><FIcon name="frame" /></FloatBtn>
            <FloatBtn $mb={7}><FIcon name="dash" /></FloatBtn>
            <FloatRule />
            <FloatBtn $mb={0}><FIcon name="note" /></FloatBtn>
          </FloatBar>
        </Canvas>

        <Splitter><Grip /></Splitter>

        <RightPanel>
          <TitleBar />
          <Heading $pad={8}>显示设置</Heading>
          <RightTabs>
            <RightTab $on>图元显示</RightTab>
            <RightTab>构件</RightTab>
          </RightTabs>
          <LayerTree>
            <LayerHead>图层构件</LayerHead>
            {layers.map(([lv, t, last], i) => (
              <LayerRow key={i} $lv={lv} $last={last}>
                {lv < 2 && <MinusBox />}
                {t}
              </LayerRow>
            ))}
          </LayerTree>
        </RightPanel>
      </Main>

      <BottomBar>
        <PageBtn $w={25} />
        <PageBtn $w={36} $on $gap={3} />
        <PageBtn $w={25} $gap={3} />
        <PageBtn $w={36} />
        <PageBtn $w={36} />
        <PageBtn $w={25} />
        <PageBtn $w={25} />
      </BottomBar>
    </>
  );
}
